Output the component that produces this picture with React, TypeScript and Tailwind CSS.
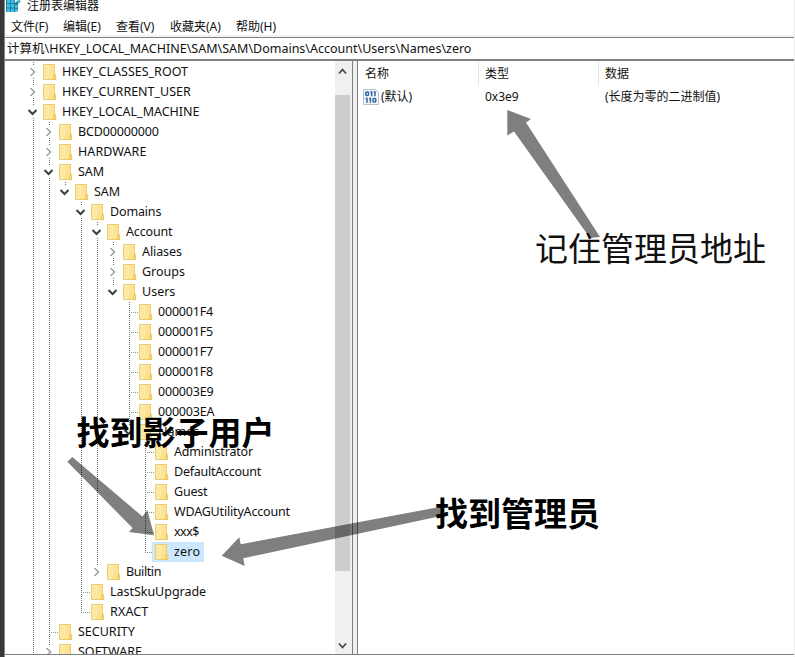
type Kind = "open" | "closed" | "leaf";
type Node = {
  label: string;
  level: number;
  kind: Kind;
  guides?: number[];
  last?: boolean;
  selected?: boolean;
  tracking?: string;
};

const nodes: Node[] = [
  { label: "HKEY_CLASSES_ROOT", level: 0, kind: "closed" },
  { label: "HKEY_CURRENT_USER", level: 0, kind: "closed" },
  { label: "HKEY_LOCAL_MACHINE", level: 0, kind: "open" },
  { label: "BCD00000000", level: 1, kind: "closed", guides: [0], tracking: "tracking-[-0.15px]" },
  { label: "HARDWARE", level: 1, kind: "closed", guides: [0], tracking: "tracking-[0.08px]" },
  { label: "SAM", level: 1, kind: "open", guides: [0] },
  { label: "SAM", level: 2, kind: "open", guides: [0, 1], last: true },
  { label: "Domains", level: 3, kind: "open", guides: [0, 1], tracking: "tracking-[-0.15px]" },
  { label: "Account", level: 4, kind: "open", guides: [0, 1, 3], tracking: "tracking-[-0.15px]" },
  { label: "Aliases", level: 5, kind: "closed", guides: [0, 1, 3, 4], tracking: "tracking-[-0.1px]" },
  { label: "Groups", level: 5, kind: "closed", guides: [0, 1, 3, 4] },
  { label: "Users", level: 5, kind: "open", guides: [0, 1, 3, 4], last: true },
  { label: "000001F4", level: 6, kind: "leaf", guides: [0, 1, 3, 4], tracking: "tracking-[-0.2px]" },
  { label: "000001F5", level: 6, kind: "leaf", guides: [0, 1, 3, 4], tracking: "tracking-[-0.2px]" },
  { label: "000001F7", level: 6, kind: "leaf", guides: [0, 1, 3, 4], tracking: "tracking-[-0.2px]" },
  { label: "000001F8", level: 6, kind: "leaf", guides: [0, 1, 3, 4], tracking: "tracking-[-0.2px]" },
  { label: "000003E9", level: 6, kind: "leaf", guides: [0, 1, 3, 4], tracking: "tracking-[-0.2px]" },
  { label: "000003EA", level: 6, kind: "leaf", guides: [0, 1, 3, 4], tracking: "tracking-[-0.2px]" },
  { label: "Names", level: 6, kind: "open", guides: [0, 1, 3, 4], last: true },
  { label: "Administrator", level: 7, kind: "leaf", guides: [0, 1, 3, 4], tracking: "tracking-[-0.17px]" },
  { label: "DefaultAccount", level: 7, kind: "leaf", guides: [0, 1, 3, 4], tracking: "tracking-[-0.25px]" },
  { label: "Guest", level: 7, kind: "leaf", guides: [0, 1, 3, 4], tracking: "tracking-[-0.2px]" },
  { label: "WDAGUtilityAccount", level: 7, kind: "leaf", guides: [0, 1, 3, 4], tracking: "tracking-[-0.18px]" },
  { label: "xxx$", level: 7, kind: "leaf", guides: [0, 1, 3, 4], tracking: "tracking-[-0.5px]" },
  { label: "zero", level: 7, kind: "leaf", guides: [0, 1, 3, 4], last: true, selected: true, tracking: "tracking-[0.2px]" },
  { label: "Builtin", level: 4, kind: "closed", guides: [0, 1, 3], last: true, tracking: "tracking-[-0.4px]" },
  { label: "LastSkuUpgrade", level: 3, kind: "leaf", guides: [0, 1], tracking: "tracking-[-0.03px]" },
  { label: "RXACT", level: 3, kind: "leaf", guides: [0, 1], last: true, tracking: "tracking-[0.15px]" },
  { label: "SECURITY", level: 1, kind: "leaf", guides: [0] },
  { label: "SOFTWARE", level: 1, kind: "closed", guides: [0] },
];

const dotsV = "w-px bg-[repeating-linear-gradient(to_bottom,#6b6b6b_0_1px,transparent_1px_2px)]";
const dotsH = "h-px bg-[repeating-linear-gradient(to_right,#8a8a8a_0_1px,transparent_1px_2px)]";

function Folder() {
  return (
    <svg width="14" height="16" viewBox="0 0 14 16" className="shrink-0">
      <path d="M.5 .5h11v9l1 1v5H.5z" fill="#fce291" stroke="#ebcd6d" />
      <path d="M1 1h7L5 15H1z" fill="#fde9a6" />
      <path d="M10.500 15.500v-4l1.200-2 1 2v4z" fill="#fbdb78" stroke="#e6c45c" strokeWidth=".8" />
    </svg>
  );
}

function Twisty({ kind }: { kind: Kind }) {
  if (kind === "leaf") return <span className={`ml-[6px] w-[9px] ${dotsH}`} />;
  return (
    <svg width="10" height="12" viewBox="0 0 10 12" className="bg-white" fill="none">
      {kind === "open" ? (
        <path d="M1.500 4l4 4 4-4" stroke="#404040" strokeWidth="2" />
      ) : (
        <path d="M3.500 2l4 4-4 4" stroke="#a3a3a3" strokeWidth="1.7" />
      )}
    </svg>
  );
}

function TreeRow({ n }: { n: Node }) {
  const columns = Array.from({ length: n.level }, (_, i) => i);
  return (
    <div className="flex h-5 shrink-0 items-center pl-[22px]">
      {columns.map((i) => (
        <span key={i} className="flex h-5 w-4 shrink-0 pl-[6px]">
          {n.guides?.includes(i) && <span className={`h-5 ${dotsV}`} />}
        </span>
      ))}
      <span className="grid h-5 w-4 shrink-0">
        <span className="col-start-1 row-start-1 flex pl-[6px]">
          <span className={`${n.last ? "h-[10px]" : "h-5"} ${dotsV}`} />
        </span>
        <span className="col-start-1 row-start-1 flex items-center">
          <Twisty kind={n.kind} />
        </span>
      </span>
      <span className={`flex h-5 items-center pr-[4px] ${n.selected ? "-ml-[3px] bg-[#cce8ff] pl-[3px]" : ""}`}>
        <Folder />
        <span className={`ml-[5px] whitespace-pre text-[12.5px] leading-5 ${n.tracking ?? ""}`}>{n.label}</span>
      </span>
    </div>
  );
}

function BinaryIcon() {
  return (
    <svg width="16" height="16" viewBox="0 0 16 16" fill="none">
      <path d="M.5 .5h12l3 3v12H.5z" fill="#f3f8fc" stroke="#b4c0cd" />
      <g stroke="#2f64a0" strokeWidth="1.5">
        <rect x="2.700" y="2.900" width="2.800" height="3.600" rx="1" />
        <path d="M8.700 2.200v5M12 2.200v5M4 8.800v5M7.400 8.800v5M7.300 2.900h1.500M10.700 2.900h1.500M2.600 9.500h1.500M6 9.500h1.500" />
        <rect x="10" y="9.500" width="2.800" height="3.600" rx="1" />
      </g>
    </svg>
  );
}

function RegistryIcon() {
  return (
    <svg width="16" height="14" viewBox="0 0 16 14">
      <path d="M0 0h9v3l3-3 3 1-1 1-2 2v6l-3 2H0z" fill="#1c7fa6" />
      <path d="M1 0h3v3H1zM5 0h3v3H5zM1 4h3v3.500H1zM5 4h3v3.500H5zM1 8.500h3V12H1zM5 8.500h3V12H5zM9 5h2.500v3H9zM9 9h2.500v3H9z" fill="#43bfe5" />
      <path d="M11 1l2-1 1 1-2 2z" fill="#55cbed" />
    </svg>
  );
}

function ScrollArrow({ up }: { up?: boolean }) {
  return (
    <svg width="16" height="17" viewBox="0 0 16 17" fill="none" className="shrink-0">
      <path d={up ? "M4 12.500l3.500-4 3.500 4" : "M4 6.500l3.500 4 3.500-4"} stroke="#484848" strokeWidth="1.800" />
    </svg>
  );
}

export default function App() {
  return (
    <div className="relative flex h-[657px] w-[795px] overflow-hidden bg-white font-['Noto_Sans','Noto_Sans_CJK_SC',sans-serif] text-[12px] text-[#111]">
      <div className="w-[4px] shrink-0 bg-[#383838]" />
      <div className="w-px shrink-0 bg-[#858585]" />
      <div className="flex min-w-0 flex-1 flex-col">
        <header className="flex h-[17px] shrink-0 items-start pl-px">
          <RegistryIcon />
          <span className="-mt-[3px] ml-[5px] leading-[18px]">注册表编辑器</span>
        </header>
        <nav className="flex h-[18px] shrink-0 items-center whitespace-nowrap pl-[6px] pt-[2px] leading-[18px]">
          <span className="w-[52px]">文件(F)</span>
          <span className="w-[53px]">编辑(E)</span>
          <span className="w-[54px]">查看(V)</span>
          <span className="w-[66px]">收藏夹(A)</span>
          <span>帮助(H)</span>
        </nav>
        <div className="h-[2px] shrink-0 bg-[#f3f3f3]" />
        <div className="flex h-[24px] shrink-0 items-center border-b-2 border-t border-[#808080] pl-[2px] pt-[2px]">
          <span className="whitespace-nowrap text-[12.5px]">
            计算机\HKEY_LOCAL_MACHINE\SAM\SAM\Domains\Account\Users\Names\zero
          </span>
        </div>
        <main className="flex h-[594px] shrink-0 border-b border-[#808080]">
          <section className="flex w-[330px] shrink-0 flex-col overflow-hidden pt-px">
            {nodes.map((n, i) => (
              <TreeRow key={i} n={n} />
            ))}
          </section>
          <div className="flex w-[17px] shrink-0 flex-col bg-[#f0f0f0]">
            <ScrollArrow up />
            <div className="mt-[17px] h-[476px] w-[15px] bg-[#cdcdcd]" />
            <div className="flex-1" />
            <ScrollArrow />
          </div>
          <div className="w-[6px] shrink-0 border-x border-[#808080] bg-[#f0f0f0]" />
          <section className="flex-1 pl-px">
            <div className="flex h-[24px] items-center leading-[26px]">
              <span className="h-full w-[120px] border-r border-[#e5e5e5] pl-[6px]">名称</span>
              <span className="h-full w-[120px] border-r border-[#e5e5e5] pl-[6px]">类型</span>
              <span className="h-full pl-[6px]">数据</span>
            </div>
            <div className="flex h-[24px] items-center whitespace-nowrap leading-[24px]">
              <span className="flex w-[120px] items-center pl-[4px]">
                <BinaryIcon />
                <span className="ml-[2px]">(默认)</span>
              </span>
              <span className="w-[120px] pl-[6px]">0x3e9</span>
              <span className="pl-[6px]">(长度为零的二进制值)</span>
            </div>
          </section>
        </main>
      </div>
      <div className="w-px shrink-0 bg-[#f0f0f0]" />

      <svg className="pointer-events-none absolute inset-0" width="795" height="657" fill="#000" fillOpacity=".5">
        <polygon points="507.300,110 531,119 526,122.500 600,237 590,238 514,131.500 507.300,135.500" />
        <polygon points="221.700,555.700 239.300,537.300 240.700,544.300 441,506.700 441,516 243.300,558.300 244.700,566" />
        <polygon points="72.300,457 142.500,516.500 147.300,510 154,535.300 129,532 132.500,528 67.300,461.700" />
      </svg>
      <div className="absolute left-[535px] top-[223px] whitespace-nowrap font-['Noto_Sans_CJK_SC',sans-serif] text-[33px] leading-[48px]">
        记住管理员地址
      </div>
      <div className="absolute left-[76.500px] top-[407px] whitespace-nowrap font-['Noto_Sans_CJK_SC',sans-serif] text-[33px] font-bold leading-[48px] text-black">
        找到影子用户
      </div>
      <div className="absolute left-[435px] top-[488px] whitespace-nowrap font-['Noto_Sans_CJK_SC',sans-serif] text-[33px] font-bold leading-[48px] text-black">
        找到管理员
      </div>
    </div>
  );
}
